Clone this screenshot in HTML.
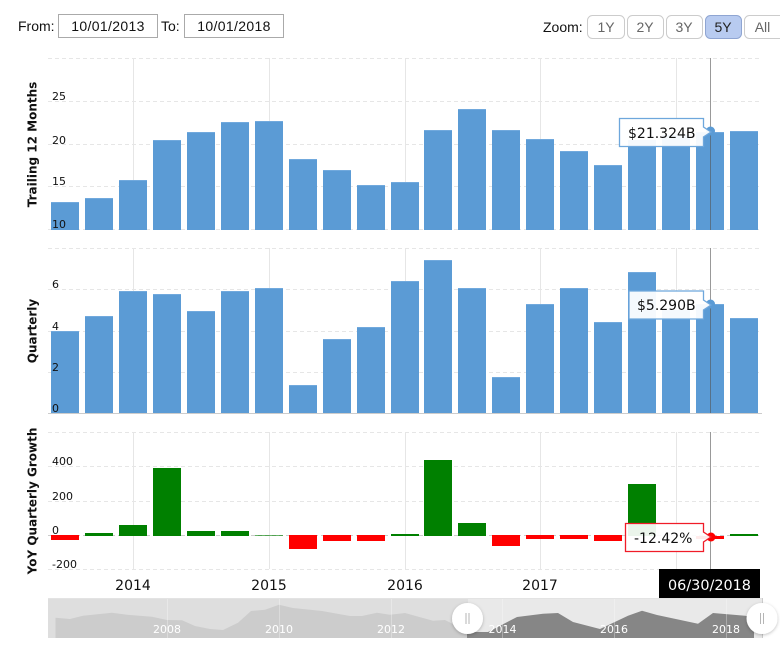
<!DOCTYPE html>
<html><head><meta charset="utf-8"><style>
html,body{margin:0;padding:0;background:#fff;width:780px;height:654px;overflow:hidden}
svg{display:block;position:absolute;left:0;top:0}
.u{font-family:"Liberation Sans",sans-serif;font-size:14px;fill:#111}
.dt{letter-spacing:.35px}
.d{font-family:"DejaVu Sans",sans-serif;fill:#111}
.y{font-size:11px}
.x{font-size:14px;text-anchor:middle}
.t{font-size:14px}
.n{font-size:11px;fill:#fff;text-anchor:middle}
.a{font-size:12px;font-weight:bold;text-anchor:middle}
.g{stroke:#e6e6e6;stroke-width:1;stroke-dasharray:4 3}
.v{stroke:#e6e6e6;stroke-width:1}
.b rect{fill:#5b9bd5}
</style></head><body>
<svg width="780" height="654" viewBox="0 0 780 654" xmlns="http://www.w3.org/2000/svg">
<!-- top controls -->
<text class="u" x="18" y="31">From:</text>
<rect x="58.5" y="14.5" width="99" height="23" fill="#fff" stroke="#aaa"/>
<text class="u dt" x="108" y="31" text-anchor="middle">10/01/2013</text>
<text class="u" x="161" y="31">To:</text>
<rect x="184.5" y="14.5" width="99" height="23" fill="#fff" stroke="#aaa"/>
<text class="u dt" x="234" y="31" text-anchor="middle">10/01/2018</text>
<text class="u" x="543" y="32">Zoom:</text>
<g fill="#fff" stroke="#ccc">
<rect x="587.5" y="15.5" width="37" height="23" rx="5"/>
<rect x="627.5" y="15.5" width="36" height="23" rx="5"/>
<rect x="666.5" y="15.5" width="36" height="23" rx="5"/>
<rect x="705.5" y="15.5" width="36" height="23" rx="5" fill="#b8cbf0" stroke="#8fa5d2"/>
<rect x="744.5" y="15.5" width="40" height="23" rx="5"/>
</g>
<g class="u" text-anchor="middle">
<text x="606" y="32" style="fill:#666">1Y</text>
<text x="645" y="32" style="fill:#666">2Y</text>
<text x="684" y="32" style="fill:#666">3Y</text>
<text x="723" y="32" style="fill:#222">5Y</text>
<text x="762.5" y="32" style="fill:#666">All</text>
</g>

<!-- grids -->
<g>
<line class="g" x1="48" x2="762" y1="58.5" y2="58.5"/>
<line class="g" x1="48" x2="762" y1="101.5" y2="101.5"/>
<line class="g" x1="48" x2="762" y1="144.5" y2="144.5"/>
<line class="g" x1="48" x2="762" y1="186.5" y2="186.5"/>
<line class="g" x1="48" x2="762" y1="229.5" y2="229.5"/>
<line class="g" x1="48" x2="762" y1="248.5" y2="248.5"/>
<line class="g" x1="48" x2="762" y1="289.5" y2="289.5"/>
<line class="g" x1="48" x2="762" y1="331.5" y2="331.5"/>
<line class="g" x1="48" x2="762" y1="372.5" y2="372.5"/>
<line x1="48" x2="762" y1="413.5" y2="413.5" stroke="#ccc"/>
<line class="g" x1="48" x2="762" y1="432.5" y2="432.5"/>
<line class="g" x1="48" x2="762" y1="466.5" y2="466.5"/>
<line class="g" x1="48" x2="762" y1="501.5" y2="501.5"/>
<line x1="48" x2="762" y1="535.5" y2="535.5" stroke="#ccc" stroke-dasharray="4 3"/>
<line class="g" x1="48" x2="762" y1="569.5" y2="569.5"/>
</g>
<g>
<line class="v" x1="133.5" x2="133.5" y1="58" y2="230"/><line class="v" x1="269.5" x2="269.5" y1="58" y2="230"/><line class="v" x1="405.5" x2="405.5" y1="58" y2="230"/><line class="v" x1="540.5" x2="540.5" y1="58" y2="230"/><line class="v" x1="676.5" x2="676.5" y1="58" y2="230"/>
<line class="v" x1="133.5" x2="133.5" y1="248" y2="413"/><line class="v" x1="269.5" x2="269.5" y1="248" y2="413"/><line class="v" x1="405.5" x2="405.5" y1="248" y2="413"/><line class="v" x1="540.5" x2="540.5" y1="248" y2="413"/><line class="v" x1="676.5" x2="676.5" y1="248" y2="413"/>
<line class="v" x1="133.5" x2="133.5" y1="432" y2="569"/><line class="v" x1="269.5" x2="269.5" y1="432" y2="569"/><line class="v" x1="405.5" x2="405.5" y1="432" y2="569"/><line class="v" x1="540.5" x2="540.5" y1="432" y2="569"/><line class="v" x1="676.5" x2="676.5" y1="432" y2="569"/>
</g>

<!-- chart 1 bars -->
<g class="b">
<rect x="51" y="202" width="28" height="28"/><rect x="85" y="198" width="28" height="32"/><rect x="119" y="180" width="28" height="50"/><rect x="153" y="140" width="28" height="90"/><rect x="187" y="132" width="28" height="98"/><rect x="221" y="122" width="28" height="108"/><rect x="255" y="121" width="28" height="109"/><rect x="289" y="159" width="28" height="71"/><rect x="323" y="170" width="28" height="60"/><rect x="357" y="185" width="28" height="45"/><rect x="391" y="182" width="28" height="48"/><rect x="424" y="130" width="28" height="100"/><rect x="458" y="109" width="28" height="121"/><rect x="492" y="130" width="28" height="100"/><rect x="526" y="139" width="28" height="91"/><rect x="560" y="151" width="28" height="79"/><rect x="594" y="165" width="28" height="65"/><rect x="628" y="140" width="28" height="90"/><rect x="662" y="135" width="28" height="95"/><rect x="696" y="132" width="28" height="98"/><rect x="730" y="131" width="28" height="99"/>
</g>
<!-- chart 2 bars -->
<g class="b">
<rect x="51" y="331" width="28" height="82"/><rect x="85" y="316" width="28" height="97"/><rect x="119" y="291" width="28" height="122"/><rect x="153" y="294" width="28" height="119"/><rect x="187" y="311" width="28" height="102"/><rect x="221" y="291" width="28" height="122"/><rect x="255" y="288" width="28" height="125"/><rect x="289" y="385" width="28" height="28"/><rect x="323" y="339" width="28" height="74"/><rect x="357" y="327" width="28" height="86"/><rect x="391" y="281" width="28" height="132"/><rect x="424" y="260" width="28" height="153"/><rect x="458" y="288" width="28" height="125"/><rect x="492" y="377" width="28" height="36"/><rect x="526" y="304" width="28" height="109"/><rect x="560" y="288" width="28" height="125"/><rect x="594" y="322" width="28" height="91"/><rect x="628" y="272" width="28" height="141"/><rect x="662" y="310" width="28" height="103"/><rect x="696" y="304" width="28" height="109"/><rect x="730" y="318" width="28" height="95"/>
</g>
<!-- lighter bar tops -->
<path stroke="#71a9dd" fill="none" d="M51 202.5h28M85 198.5h28M119 180.5h28M153 140.5h28M187 132.5h28M221 122.5h28M255 121.5h28M289 159.5h28M323 170.5h28M357 185.5h28M391 182.5h28M424 130.5h28M458 109.5h28M492 130.5h28M526 139.5h28M560 151.5h28M594 165.5h28M696 132.5h28M730 131.5h28M51 331.5h28M85 316.5h28M119 291.5h28M153 294.5h28M187 311.5h28M221 291.5h28M255 288.5h28M289 385.5h28M323 339.5h28M357 327.5h28M391 281.5h28M424 260.5h28M458 288.5h28M492 377.5h28M526 304.5h28M560 288.5h28M594 322.5h28M628 272.5h28M696 304.5h28M730 318.5h28"/>
<!-- chart 3 bars -->
<g fill="#008000">
<rect x="85" y="533" width="28" height="3"/><rect x="119" y="525" width="28" height="11"/><rect x="153" y="468" width="28" height="68"/><rect x="187" y="531" width="28" height="5"/><rect x="221" y="531" width="28" height="5"/><rect x="255" y="535" width="28" height="1" fill-opacity=".6"/><rect x="391" y="534" width="28" height="2"/><rect x="424" y="460" width="28" height="76"/><rect x="458" y="523" width="28" height="13"/><rect x="628" y="484" width="28" height="52"/><rect x="730" y="534" width="28" height="2"/>
</g>
<g fill="#ff0000">
<rect x="51" y="535" width="28" height="5"/><rect x="289" y="535" width="28" height="14"/><rect x="323" y="535" width="28" height="6"/><rect x="357" y="535" width="28" height="6"/><rect x="492" y="535" width="28" height="11"/><rect x="526" y="535" width="28" height="4"/><rect x="560" y="535" width="28" height="4"/><rect x="594" y="535" width="28" height="6"/><rect x="696" y="536" width="28" height="3"/>
</g>

<!-- y labels -->
<g class="d y">
<text x="52" y="100">25</text><text x="52" y="144">20</text><text x="52" y="185">15</text><text x="52" y="228">10</text>
<text x="52" y="288">6</text><text x="52" y="330">4</text><text x="52" y="371">2</text><text x="52" y="412">0</text>
<text x="52" y="465">400</text><text x="52" y="500">200</text><text x="52" y="534">0</text><text x="52" y="568">-200</text>
</g>
<g class="d a">
<text transform="translate(36.5,144.5) rotate(-90)">Trailing 12 Months</text>
<text transform="translate(36.5,331) rotate(-90)">Quarterly</text>
<text transform="translate(36.5,501) rotate(-90)">YoY Quarterly Growth</text>
</g>
<g class="d x">
<text x="133" y="590">2014</text><text x="269" y="590">2015</text><text x="405" y="590">2016</text><text x="540" y="590">2017</text>
</g>

<!-- navigator -->
<rect x="48" y="598" width="420" height="40" fill="#dedede"/>
<rect x="468" y="598" width="295" height="40" fill="#e9e9e9"/>
<rect x="48" y="598" width="715" height="1" fill="#e3e3e3"/>
<path d="M55.5 638V617.7L70 619L83 615.7L112 612.7L127 614.7L152 616.7L167 620L182 620.3L195 626L210 629L223 630L238 622.7L251 611L265 609.7L279 604.7L293 608L322 611L350 616L362 616L377 612.7L390 614.7L405 613L423 618L433 620.7L445 620L468 631.7V638Z" fill="#cccccc"/>
<path d="M467 638V632L488 632L517 617L543 613.7L558 613L573 622L600 629L628 615.7L642 610.7L657 615L698 623.7L713 613L745 615.7L754 617V638Z" fill="#868686"/>
<g stroke="#fff" stroke-opacity=".3">
<line x1="167.5" x2="167.5" y1="599" y2="638"/><line x1="279.5" x2="279.5" y1="599" y2="638"/><line x1="391.5" x2="391.5" y1="599" y2="638"/><line x1="502.5" x2="502.5" y1="599" y2="638"/><line x1="614.5" x2="614.5" y1="599" y2="638"/><line x1="726.5" x2="726.5" y1="599" y2="638"/>
</g>
<line x1="762.5" x2="762.5" y1="598" y2="638" stroke="#ccc"/>
<g class="d n">
<text x="167" y="633" style="fill:#fff">2008</text><text x="279" y="633" style="fill:#fff">2010</text><text x="391" y="633" style="fill:#fff">2012</text><text x="502.5" y="633" style="fill:#fff">2014</text><text x="614" y="633" style="fill:#fff">2016</text><text x="726" y="633" style="fill:#fff">2018</text>
</g>
<defs><filter id="s" x="-30%" y="-30%" width="160%" height="160%"><feDropShadow dx="0" dy="1" stdDeviation="1.5" flood-color="#000" flood-opacity=".25"/></filter></defs>
<circle cx="467.5" cy="618.5" r="15.5" fill="#fff" filter="url(#s)"/>
<circle cx="762" cy="618.5" r="15.5" fill="#fff" filter="url(#s)"/>
<g stroke="#b5b5b5">
<line x1="466" x2="466" y1="613" y2="624"/><line x1="469" x2="469" y1="613" y2="624"/>
<line x1="760.5" x2="760.5" y1="613" y2="624"/><line x1="763.5" x2="763.5" y1="613" y2="624"/>
</g>

<!-- crosshair -->
<line x1="710.5" x2="710.5" y1="58" y2="230" stroke="#555" stroke-opacity=".6"/>
<line x1="710.5" x2="710.5" y1="248" y2="413" stroke="#555" stroke-opacity=".6"/>
<line x1="710.5" x2="710.5" y1="432" y2="569" stroke="#555" stroke-opacity=".6"/>

<!-- date -->
<rect x="659" y="569" width="101" height="29" fill="#000"/>
<text class="d" x="709.5" y="590" text-anchor="middle" style="font-size:14.4px;fill:#fff">06/30/2018</text>

<!-- tooltips -->
<circle cx="710.5" cy="131" r="4.5" fill="#5b9bd5"/>
<path d="M619.5 118.5H703.5V127L711 132L703.5 137V146.5H619.5Z" fill="#fff" fill-opacity=".94" stroke="#6ea7dc" stroke-width="1.3"/>
<text class="d t" x="628" y="138">$21.324B</text>

<circle cx="710.5" cy="304" r="4.5" fill="#5b9bd5"/>
<path d="M629 291H703.5V300L711 305L703.5 310V319H629Z" fill="#fff" fill-opacity=".94" stroke="#6ea7dc" stroke-width="1.3"/>
<text class="d t" x="637" y="310">$5.290B</text>

<circle cx="711" cy="537" r="4.5" fill="#ff0000"/>
<path d="M625.5 523.500H703.5V532L711 537L703.500 542V551.500H625.500Z" fill="#ffffff" fill-opacity=".92" stroke="#f01c28" stroke-width="1.3"/>
<text class="d t" x="634" y="543">-12.42%</text>
</svg>
</body></html>
